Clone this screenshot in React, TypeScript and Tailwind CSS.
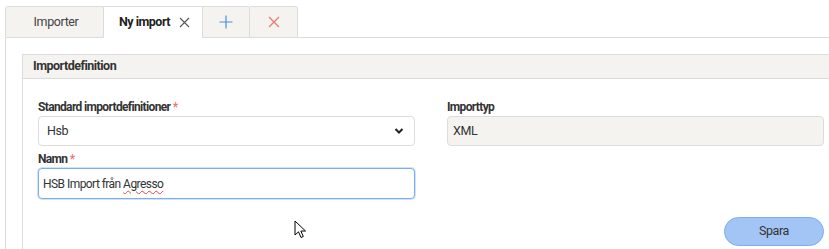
import React from 'react';

const font = { fontFamily: 'Roboto, "Noto Sans", sans-serif' };

const Chevron = () => (
  <svg width="10" height="8" viewBox="0 0 10 8" className="text-[#222]">
    <path d="M1.5 2 L5 5.5 L8.5 2" fill="none" stroke="currentColor" strokeWidth="2" />
  </svg>
);

const Cursor = () => (
  <svg width="13" height="20" viewBox="0 0 13 20" className="absolute left-[294px] top-[220px]">
    <path
      d="M1 1 L1 15 L4.5 11.8 L7 17.5 L9.3 16.5 L6.9 11 L11.5 11 Z"
      fill="#fff"
      stroke="#000"
      strokeWidth="1"
      strokeLinejoin="round"
    />
  </svg>
);

function Tabs() {
  return (
    <div className="flex items-end pt-[6px] pl-[5px]">
      <div className="flex h-[32px] w-[99px] items-center justify-center rounded-tl-[3px] border border-[#dcdcdc] bg-[#f4f3f0] pl-[3px] text-[12.5px] tracking-[-0.4px] text-[#444]">
        Importer
      </div>
      <div className="flex h-[32px] w-[99px] items-center justify-center gap-[9px] border-t border-r border-[#dcdcdc] bg-white pl-[3px] text-[12.5px] font-bold tracking-[-0.5px] text-[#222]">
        <span>Ny import</span>
        <svg width="11" height="11" viewBox="0 0 11 11">
          <path d="M1 1 L10 10 M10 1 L1 10" stroke="#555" strokeWidth="1.1" />
        </svg>
      </div>
      <div className="flex h-[32px] w-[47px] items-center justify-center rounded-tr-[3px] border border-l-0 border-[#dcdcdc] bg-[#f4f3f0]">
        <svg width="14" height="14" viewBox="0 0 14 14">
          <path d="M7 0.5 V13.5 M0.5 7 H13.5" stroke="#4a8fdc" strokeWidth="1.2" />
        </svg>
      </div>
      <div className="flex h-[32px] w-[48px] items-center justify-center rounded-tr-[3px] border border-l-0 border-[#dcdcdc] bg-[#f4f3f0]">
        <svg width="12" height="12" viewBox="0 0 12 12">
          <path d="M1 1 L11 11 M11 1 L1 11" stroke="#e8776f" strokeWidth="1.2" />
        </svg>
      </div>
      <div className="flex-1 border-b border-[#dcdcdc]" />
    </div>
  );
}

export default function App() {
  return (
    <div className="relative h-[249px] w-[829px] overflow-hidden bg-white" style={font}>
      <Tabs />
      <div className="ml-[5px] h-[220px] border-l border-[#dcdcdc] pt-[16px] pl-[16px]">
        <div className="w-[818px] border border-[#dcdcdc]">
          <div className="flex h-[24px] items-center border-b border-[#dcdcdc] bg-[#f4f3f0] pl-[10px] text-[12.5px] font-bold tracking-[-0.5px] text-[#333]">
            Importdefinition
          </div>
          <div className="px-[15px] pt-[21px] pb-[10px]">
            <div className="grid grid-cols-2 gap-x-[32px]">
              <div>
                <div className="h-[14px] text-[12px] leading-[14px] font-bold tracking-[-0.65px] text-[#333]">
                  Standard importdefinitioner <span className="text-[#e8776f]">*</span>
                </div>
                <div className="mt-[2px] flex h-[30px] items-center justify-between rounded-[4px] border border-[#dcdcdc] bg-white pr-[10px] pl-[8px] text-[12.5px] tracking-[-0.4px] text-[#333]">
                  <span className="pt-px">Hsb</span>
                  <Chevron />
                </div>
              </div>
              <div>
                <div className="h-[14px] text-[12px] leading-[14px] font-bold tracking-[-0.65px] text-[#333]">Importtyp</div>
                <div className="mt-[2px] flex h-[30px] items-center rounded-[4px] border border-[#dcdcdc] bg-[#f4f3f0] pl-[5px] text-[12.5px] tracking-[-0.4px] text-[#333]">
                  XML
                </div>
              </div>
              <div className="mt-[6px]">
                <div className="h-[14px] text-[12px] leading-[14px] font-bold tracking-[-0.65px] text-[#333]">
                  Namn <span className="text-[#e8776f]">*</span>
                </div>
                <div className="mt-[2px] flex h-[31px] items-center rounded-[4px] border border-[#7aaef0] bg-white pl-[4px] text-[12px] tracking-[-0.55px] text-[#333] shadow-[0_0_0_1px_rgba(122,174,240,0.35)]">
                  HSB Import från&nbsp;
                  <span className="underline decoration-[#e04848] decoration-wavy decoration-1 underline-offset-2">Agresso</span>
                </div>
              </div>
            </div>
            <div className="mt-[18px] flex justify-end">
              <button className="h-[29px] w-[100px] rounded-full border border-[#7aaef0] bg-[#a2c5f6] text-[12.5px] tracking-[-0.4px] text-[#333]">
                Spara
              </button>
            </div>
          </div>
        </div>
      </div>
      <Cursor />
    </div>
  );
}
